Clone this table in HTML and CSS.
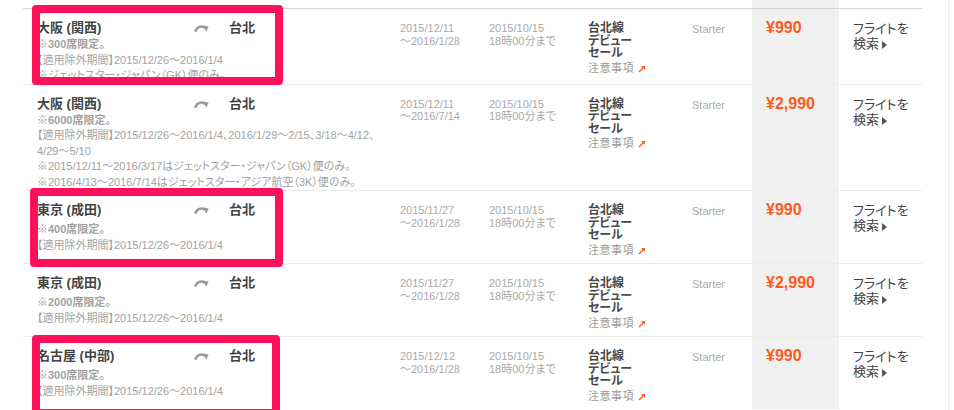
FILE: index.html
```html
<!DOCTYPE html>
<html lang="ja">
<head>
	<meta charset="UTF-8">
	<title>台北線デビューセール</title>
	<link rel="stylesheet" href="styles.css">
</head>
<body>
	<div class="page">
		<div class="list">
			<div class="row head">
				<div></div><div></div><div></div><div></div><div></div>
				<div class="price"></div>
				<div></div>
			</div>

			<!-- 大阪 (関西) 300 -->
			<div class="row first">
				<div class="route">
					<div class="route-top">
						<span class="from">大阪 (関西)</span>
						<span class="icon"><svg width="15" height="8" viewBox="0 0 15 8"><path d="M1.2 7.6 C2.8 2.6 7.5 1.2 10.8 4" fill="none" stroke="#9a9a9a" stroke-width="2.6"/><polygon points="8.6,1.2 14.6,2.6 12.4,7.8" fill="#9a9a9a"/></svg></span>
						<span class="to">台北</span>
					</div>
					<p class="seat">※300席限定。</p>
					<p>【適用除外期間】2015/12/26～2016/1/4</p>
					<p>※ジェットスター・ジャパン（GK）便のみ。</p>
				</div>
				<div class="dates">2015/12/11<br>～2016/1/28</div>
				<div class="dates">2015/10/15<br>18時00分まで</div>
				<div class="sale">台北線<br>デビュー<br>セール<span class="note">注意事項<svg width="8" height="8" viewBox="0 0 8 8"><path d="M1 7 L6 2" stroke="#ff5a1e" stroke-width="1.4"/><polygon points="3,1 7,1 7,5" fill="#ff5a1e"/></svg></span></div>
				<div class="fare">Starter</div>
				<div class="price">¥990</div>
				<div class="search">フライトを<br>検索<span class="tri"></span></div>
			</div>

			<!-- 大阪 (関西) 6000 -->
			<div class="row">
				<div class="route">
					<div class="route-top">
						<span class="from">大阪 (関西)</span>
						<span class="icon"><svg width="15" height="8" viewBox="0 0 15 8"><path d="M1.2 7.6 C2.8 2.6 7.5 1.2 10.8 4" fill="none" stroke="#9a9a9a" stroke-width="2.6"/><polygon points="8.6,1.2 14.6,2.6 12.4,7.8" fill="#9a9a9a"/></svg></span>
						<span class="to">台北</span>
					</div>
					<p class="seat">※6000席限定。</p>
					<p>【適用除外期間】2015/12/26～2016/1/4、2016/1/29～2/15、3/18～4/12、<br>4/29～5/10</p>
					<p>※2015/12/11～2016/3/17はジェットスター・ジャパン（GK）便のみ。</p>
					<p>※2016/4/13～2016/7/14はジェットスター・アジア航空（3K）便のみ。</p>
				</div>
				<div class="dates">2015/12/11<br>～2016/7/14</div>
				<div class="dates">2015/10/15<br>18時00分まで</div>
				<div class="sale">台北線<br>デビュー<br>セール<span class="note">注意事項<svg width="8" height="8" viewBox="0 0 8 8"><path d="M1 7 L6 2" stroke="#ff5a1e" stroke-width="1.4"/><polygon points="3,1 7,1 7,5" fill="#ff5a1e"/></svg></span></div>
				<div class="fare">Starter</div>
				<div class="price">¥2,990</div>
				<div class="search">フライトを<br>検索<span class="tri"></span></div>
			</div>

			<!-- 東京 (成田) 400 -->
			<div class="row">
				<div class="route">
					<div class="route-top">
						<span class="from">東京 (成田)</span>
						<span class="icon"><svg width="15" height="8" viewBox="0 0 15 8"><path d="M1.2 7.6 C2.8 2.6 7.5 1.2 10.8 4" fill="none" stroke="#9a9a9a" stroke-width="2.6"/><polygon points="8.6,1.2 14.6,2.6 12.4,7.8" fill="#9a9a9a"/></svg></span>
						<span class="to">台北</span>
					</div>
					<p class="seat gap">※400席限定。</p>
					<p>【適用除外期間】2015/12/26～2016/1/4</p>
				</div>
				<div class="dates">2015/11/27<br>～2016/1/28</div>
				<div class="dates">2015/10/15<br>18時00分まで</div>
				<div class="sale">台北線<br>デビュー<br>セール<span class="note">注意事項<svg width="8" height="8" viewBox="0 0 8 8"><path d="M1 7 L6 2" stroke="#ff5a1e" stroke-width="1.4"/><polygon points="3,1 7,1 7,5" fill="#ff5a1e"/></svg></span></div>
				<div class="fare">Starter</div>
				<div class="price">¥990</div>
				<div class="search">フライトを<br>検索<span class="tri"></span></div>
			</div>

			<!-- 東京 (成田) 2000 -->
			<div class="row">
				<div class="route">
					<div class="route-top">
						<span class="from">東京 (成田)</span>
						<span class="icon"><svg width="15" height="8" viewBox="0 0 15 8"><path d="M1.2 7.6 C2.8 2.6 7.5 1.2 10.8 4" fill="none" stroke="#9a9a9a" stroke-width="2.6"/><polygon points="8.6,1.2 14.6,2.6 12.4,7.8" fill="#9a9a9a"/></svg></span>
						<span class="to">台北</span>
					</div>
					<p class="seat gap">※2000席限定。</p>
					<p>【適用除外期間】2015/12/26～2016/1/4</p>
				</div>
				<div class="dates">2015/11/27<br>～2016/1/28</div>
				<div class="dates">2015/10/15<br>18時00分まで</div>
				<div class="sale">台北線<br>デビュー<br>セール<span class="note">注意事項<svg width="8" height="8" viewBox="0 0 8 8"><path d="M1 7 L6 2" stroke="#ff5a1e" stroke-width="1.4"/><polygon points="3,1 7,1 7,5" fill="#ff5a1e"/></svg></span></div>
				<div class="fare">Starter</div>
				<div class="price">¥2,990</div>
				<div class="search">フライトを<br>検索<span class="tri"></span></div>
			</div>

			<!-- 名古屋 (中部) 300 -->
			<div class="row">
				<div class="route">
					<div class="route-top">
						<span class="from">名古屋 (中部)</span>
						<span class="icon"><svg width="15" height="8" viewBox="0 0 15 8"><path d="M1.2 7.6 C2.8 2.6 7.5 1.2 10.8 4" fill="none" stroke="#9a9a9a" stroke-width="2.6"/><polygon points="8.6,1.2 14.6,2.6 12.4,7.8" fill="#9a9a9a"/></svg></span>
						<span class="to">台北</span>
					</div>
					<p class="seat gap">※300席限定。</p>
					<p>【適用除外期間】2015/12/26～2016/1/4</p>
				</div>
				<div class="dates">2015/12/12<br>～2016/1/28</div>
				<div class="dates">2015/10/15<br>18時00分まで</div>
				<div class="sale">台北線<br>デビュー<br>セール<span class="note">注意事項<svg width="8" height="8" viewBox="0 0 8 8"><path d="M1 7 L6 2" stroke="#ff5a1e" stroke-width="1.4"/><polygon points="3,1 7,1 7,5" fill="#ff5a1e"/></svg></span></div>
				<div class="fare">Starter</div>
				<div class="price">¥990</div>
				<div class="search">フライトを<br>検索<span class="tri"></span></div>
			</div>
		</div>

		<!-- highlight marks -->
		<div class="mark mark1"></div>
		<div class="mark mark2"></div>
		<div class="mark mark3"></div>
	</div>
</body>
</html>
```

FILE: styles.css
```css
/*common*/
*{
	margin: 0;
	padding: 0;
	box-sizing: border-box;
}
body{
	font-family: "Liberation Sans", "Noto Sans CJK JP", sans-serif;
	font-feature-settings: "palt";
	color: #444;
	background: #fff;
	overflow: hidden;
}
.page{
	position: relative;
	width: 949px;
	height: 410px;
	border-right: 1px solid #ececec;
	overflow: hidden;
}

/*list*/
.list{
	width: 899px;
	margin-left: 23px;
}
.row{
	display: grid;
	grid-template-columns: 377px 89px 99px 104px 60px 87px 83px;
	min-height: 73px;
	border-top: 1px solid #ebebeb;
}
.row.head{
	min-height: 8px;
	height: 8px;
	border-top: 0;
}
.row.first{
	border-top-color: #d6d6d6;
}
.row > div{
	padding-top: 12px;
}
.row.head > div{
	padding-top: 0;
}

/*route*/
.route{
	padding-left: 14px;
}
.route-top{
	display: flex;
	align-items: center;
	height: 14px;
	font-size: 13px;
	font-weight: bold;
	line-height: 14px;
}
.route-top .from{
	width: 157px;
}
.route-top .icon{
	width: 35px;
	height: 14px;
	display: flex;
	align-items: center;
}
.route p{
	font-size: 11px;
	line-height: 15.5px;
	color: #a2a2a2;
	white-space: nowrap;
}
.route p.seat{
	font-weight: bold;
	margin-top: 2px;
}
.route p.gap{
	margin-top: 5px;
}

/*dates*/
.row > .dates{
	padding-top: 13px;
	font-size: 11px;
	line-height: 12.5px;
	color: #aaa;
}

/*sale*/
.row > .sale{
	padding-top: 13px;
	font-size: 12px;
	font-weight: bold;
	line-height: 12.5px;
	color: #4a4a4a;
}
.sale .note{
	display: block;
	margin-top: 1px;
	font-size: 11px;
	font-weight: normal;
	line-height: 14px;
	color: #999;
	letter-spacing: 0.5px;
}
.sale .note svg{
	margin-left: 4px;
	vertical-align: -1px;
}

.row > .fare{
	padding-top: 14px;
	font-size: 11px;
	line-height: 12px;
	color: #aaa;
}

.price{
	background: #f0f0f0;
	padding-left: 14px;
}
.row > .price{
	padding-top: 10px;
	font-size: 16px;
	font-weight: bold;
	line-height: 18px;
	color: #ff5a1e;
}

.row > .search{
	padding-left: 14px;
	font-size: 13px;
	line-height: 15px;
	color: #444;
}
.search .tri{
	display: inline-block;
	width: 0;
	height: 0;
	margin-left: 3px;
	border-left: 5px solid #555;
	border-top: 4px solid transparent;
	border-bottom: 4px solid transparent;
	vertical-align: -1px;
}

/*marks*/
.mark{
	position: absolute;
	border: 8px solid #ff1159;
	border-radius: 4px;
}
.mark1{
	left: 32px;
	top: 5px;
	width: 251px;
	height: 80px;
}
.mark2{
	left: 30px;
	top: 188px;
	width: 253px;
	height: 79px;
}
.mark3{
	left: 32px;
	top: 335px;
	width: 248px;
	height: 82px;
}
```
